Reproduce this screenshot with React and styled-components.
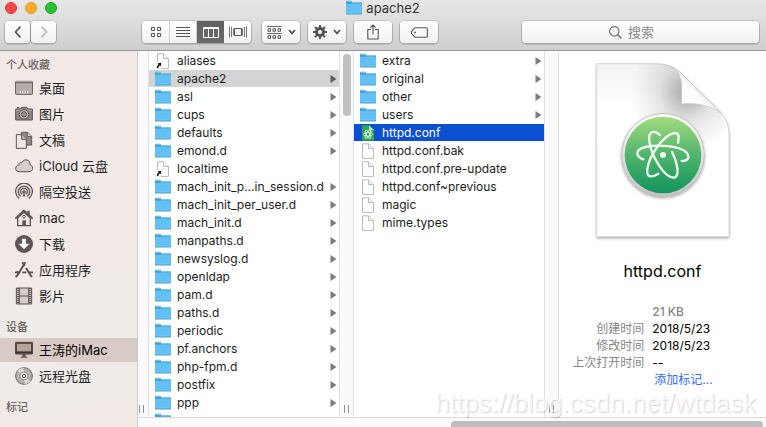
import React from "react";
import styled, { createGlobalStyle, css } from "styled-components";

const GlobalStyle = createGlobalStyle`
  * { box-sizing: border-box; }
  body {
    margin: 0;
    background: #fff;
    font-family: Inter, "Noto Sans CJK SC", sans-serif;
    font-size: 12px;
    color: #1c1c1c;
  }
  button, input { font: inherit; color: inherit; }
  ul, dl, dd, h1, h2, p { margin: 0; padding: 0; }
  ul { list-style: none; }
`;

const Window = styled.div`
  display: flex;
  flex-direction: column;
  height: 100vh;
  overflow: hidden;
  position: relative;
`;

/* ---------- toolbar ---------- */

const Header = styled.header`
  flex: none;
  padding-bottom: 7px;
  background: linear-gradient(#e7e7e7, #cfcfcf);
  border-bottom: 1px solid #979797;
`;

const TitleBar = styled.div`
  display: grid;
  grid-template-columns: 1fr auto 1fr;
  align-items: center;
  height: 15px;
  margin-bottom: 6px;
  padding: 0 5px;
`;

const Lights = styled.div`
  display: flex;
  gap: 8px;
`;

const Light = styled.button`
  width: 12px;
  height: 12px;
  padding: 0;
  border: 1px solid ${(p) => p.$edge};
  border-radius: 50%;
  background: ${(p) => p.$fill};
`;

const Title = styled.h1`
  display: flex;
  align-items: center;
  gap: 4px;
  font-size: 13px;
  line-height: 15px;
  font-weight: 400;
  color: #333;
`;

const Tools = styled.div`
  display: flex;
  align-items: center;
  gap: 8px;
  padding: 0 7px 0 5px;
`;

const Group = styled.div`
  display: flex;
  gap: 1px;
  margin-right: ${(p) => p.$after || 0}px;
`;

const face = css`
  border-radius: 4px;
  background: linear-gradient(#fff, #f1f1f1);
  box-shadow: 0 0 0 1px rgba(0, 0, 0, 0.1), 0 1px 0 1px rgba(0, 0, 0, 0.1);
`;

const ToolButton = styled.button`
  ${face}
  display: flex;
  align-items: center;
  justify-content: center;
  gap: 6px;
  width: ${(p) => p.$width}px;
  height: 22px;
  padding: 0;
  border: 0;
  color: ${(p) => (p.$dim ? "#b9b9b9" : "#555")};
`;

const Segments = styled.div`
  ${face}
  display: flex;
  height: 22px;
  margin-right: 3px;
`;

const Segment = styled.button`
  display: flex;
  align-items: center;
  justify-content: center;
  width: 27px;
  height: 22px;
  padding: 0;
  border: 0;
  border-right: 1px solid #d0d0d0;
  background: none;
  color: #555;
  &:first-child { width: 28px; }
  &:last-child { border-right: 0; }
  ${(p) =>
    p.$active &&
    css`
      background: linear-gradient(#606060, #6c6c6c);
      color: #fff;
      border-right: 0;
    `}
`;

const Search = styled.label`
  ${face}
  display: flex;
  flex: 1;
  align-items: center;
  justify-content: center;
  gap: 6px;
  height: 22px;
  margin-left: 76px;
  color: #6a6a6a;
`;

const SearchInput = styled.input`
  width: 44px;
  padding: 0;
  border: 0;
  outline: 0;
  background: none;
  font-size: 13px;
  &::placeholder { color: #8c8c8c; opacity: 1; }
`;

/* ---------- body ---------- */

const Body = styled.div`
  display: flex;
  flex: 1;
  min-height: 0;
`;

const Sidebar = styled.nav`
  flex: none;
  width: 138px;
  padding-top: 5px;
  overflow: hidden;
  border-right: 1px solid #cfcaca;
  background: linear-gradient(170deg, #f3e9e7 0%, #f3eae8 50%, #efece9 75%, #f3ebe9 100%);
`;

const Section = styled.section`
  margin-bottom: 10px;
`;

const SectionTitle = styled.h2`
  padding-left: 6px;
  margin-bottom: 2px;
  font-size: 11px;
  line-height: 18px;
  font-weight: 500;
  color: #6b6463;
`;

const Place = styled.button`
  display: flex;
  align-items: center;
  gap: 6px;
  width: 100%;
  height: 24px;
  padding: 0 0 0 15px;
  border: 0;
  background: ${(p) => (p.$active ? "#d8cac4" : "none")};
  color: ${(p) => (p.$active ? "#000" : "#221f1f")};
  font-size: 13px;
  line-height: 24px;
  text-align: left;
  white-space: nowrap;
`;

const PlaceItem = styled.li`
  margin-bottom: 2px;
  &:last-child { margin-bottom: 0; }
`;

const Browser = styled.main`
  display: flex;
  flex: 1;
  flex-direction: column;
  min-width: 0;
`;

const Panes = styled.div`
  display: flex;
  flex: 1;
  min-height: 0;
`;

const Column = styled.ul`
  flex: none;
  width: 190px;
  padding-top: 1px;
  overflow: hidden;
`;

const Entry = styled.button`
  display: flex;
  align-items: center;
  width: 100%;
  height: 17px;
  margin-bottom: 1px;
  padding: 0 2px 0 6px;
  border: 0;
  gap: 6px;
  background: ${(p) => (p.$state === "open" ? "#d4d4d4" : p.$state === "selected" ? "#0a50d0" : "none")};
  color: ${(p) => (p.$state === "selected" ? "#fff" : "inherit")};
  line-height: 17px;
  text-align: left;
  white-space: nowrap;
`;

const EntryName = styled.span`
  flex: 1;
`;

const Gutter = styled.div`
  display: flex;
  flex: none;
  flex-direction: column;
  align-items: center;
  justify-content: space-between;
  width: ${(p) => p.$width}px;
  padding: 3px 0 4px;
  border: solid #e2e2e2;
  border-width: 0 1px 0 ${(p) => (p.$first ? 0 : 1)}px;
  background: #fafafa;
`;

const Thumb = styled.div`
  width: 8px;
  height: 62px;
  border-radius: 4px;
  background: ${(p) => (p.$shown ? "#c1c1c1" : "none")};
`;

const Grip = styled.div`
  width: 5px;
  height: 8px;
  margin-right: ${(p) => p.$inset || 0}px;
  border: solid #929292;
  border-width: 0 1px;
`;

const ScrollTrack = styled.div`
  display: flex;
  flex: none;
  justify-content: flex-end;
  height: 10px;
  padding: 3px 3px 0 0;
  overflow: hidden;
  border-top: 1px solid #dcdcdc;
  background: #fafafa;
`;

const ScrollThumb = styled.div`
  width: 50%;
  height: 8px;
  border-radius: 4px;
  background: #bdbdbd;
`;

const Preview = styled.aside`
  display: flex;
  flex: 1;
  flex-direction: column;
  align-items: center;
  min-width: 0;
  padding-top: 10px;
`;

const FileName = styled.h2`
  margin: 18px 0 22px;
  font-size: 16px;
  line-height: 20px;
  font-weight: 400;
  color: #000;
`;

const Facts = styled.dl`
  display: grid;
  grid-template-columns: 3fr 4fr;
  column-gap: 8px;
  width: 100%;
  line-height: 17px;
  white-space: nowrap;
`;

const FactLabel = styled.dt`
  color: #868686;
  text-align: right;
`;

const FactValue = styled.dd`
  color: ${(p) => (p.$muted ? "#868686" : "#000")};
  font-weight: ${(p) => (p.$muted ? 500 : 400)};
`;

const TagLink = styled.a`
  padding-left: 2px;
  color: #2f6bff;
  text-decoration: none;
`;

const Watermark = styled.p`
  position: absolute;
  right: 10px;
  bottom: 9px;
  font-family: "Liberation Sans", sans-serif;
  font-size: 26px;
  line-height: 30px;
  color: rgba(255, 255, 255, 0.75);
  text-shadow: 1px 1px 1px rgba(0, 0, 0, 0.16);
  pointer-events: none;
`;

/* ---------- drawings ---------- */

const Folder = () => (
  <svg width="16" height="16" viewBox="0 0 16 16" aria-hidden="true">
    <path d="M0 2Q0 .8 1 .8H5.300L6.500 2.200H15Q16 2.200 16 3.200V13.400Q16 14.400 15 14.400H1Q0 14.400 0 13.400Z" fill="#3f9fce" />
    <path d="M0 3.800H16V13.200H0Z" fill="#62c0f4" />
    <path d="M1 1.500H5L6.200 2.900H15" fill="none" stroke="#8bd0f5" strokeWidth=".8" />
    <path d="M1 13H15" stroke="#7bcdf7" strokeWidth=".8" />
  </svg>
);

const Page = ({ alias }) => (
  <svg width="16" height="16" viewBox="0 0 16 16" aria-hidden="true">
    <path d="M2.5.8H8.500L13.500 5.500V15.400H2.500Z" fill="#fff" stroke="#bababa" />
    <path d="M8.500 .8V5.500H13.500" fill="#f3f3f3" stroke="#bababa" />
    {alias && (
      <g>
        <path d="M1 9H6.500V15.500H1Z" fill="#fff" stroke="#ddd" strokeWidth=".6" />
        <path d="M2.700 10H6V13.300L4.900 12.200Q3.400 13.200 3.400 15H1.800Q1.800 12.400 3.800 11.100Z" fill="#111" />
      </g>
    )}
  </svg>
);

const orbits = [
  "M190 328C165 318 165 298 197 291C235 282 300 288 320 308C331 323 324 333 305 333",
  "M235 371C215 383 199 384 202 358C206 320 250 254 283 249C299 248 297 262 294 278",
  "M240 255C222 239 204 243 208 273C214 320 255 386 284 383C299 378 293 340 276 306",
];

const AtomPage = () => (
  <svg width="16" height="16" viewBox="0 0 16 16" aria-hidden="true">
    <path d="M2 .3H9L14 5.300V15.700H2Z" fill="#32a455" />
    <path d="M9 .3V5.300H14Z" fill="#b9e7b1" />
    <g fill="none" stroke="#e8ffec" strokeWidth=".8">
      <ellipse cx="8" cy="9.3" rx="4.6" ry="1.8" />
      <ellipse cx="8" cy="9.3" rx="4.6" ry="1.8" transform="rotate(60 8 9.3)" />
      <ellipse cx="8" cy="9.3" rx="4.6" ry="1.8" transform="rotate(120 8 9.3)" />
    </g>
  </svg>
);

const Chevron = ({ left, small }) => (
  <svg width="8" height={small ? 6 : 12} viewBox={small ? "0 0 8 6" : "0 0 8 12"} fill="none" stroke="currentColor" strokeWidth={small ? 1.8 : 1.7} aria-hidden="true">
    <path d={small ? "M1 1L4 4.3L7 1" : left ? "M6.5 .7L1.5 6L6.5 11.3" : "M1.5 .7L6.5 6L1.5 11.3"} />
  </svg>
);

const Disclosure = ({ dark }) => (
  <svg width="7" height="8" viewBox="0 0 7 8" aria-hidden="true">
    <path d="M.5 0L6.500 4L.5 8Z" fill={dark ? "#5c5c5c" : "#7d7d7d"} />
  </svg>
);

const toolArt = {
  icons: (
    <svg width="12" height="11" viewBox="0 0 12 11" fill="none" stroke="currentColor">
      <path d="M1.500 .5H4.500V3.500H1.500ZM7.500 .5H10.500V3.500H7.500ZM1.500 6.500H4.500V9.500H1.500ZM7.500 6.500H10.500V9.500H7.500Z" />
    </svg>
  ),
  list: (
    <svg width="14" height="11" viewBox="0 0 14 11" fill="none" stroke="currentColor">
      <path d="M0 .5H14M0 3.5H14M0 6.5H14M0 9.5H14" />
    </svg>
  ),
  columns: (
    <svg width="16" height="11" viewBox="0 0 16 11" fill="none" stroke="currentColor">
      <path d="M.5 .5H15.5V10.5H.5ZM5.5 .5V10.5M10.5 .5V10.5M.5 1.5H15.5" />
    </svg>
  ),
  flow: (
    <svg width="18" height="12" viewBox="0 0 18 12" fill="none" stroke="currentColor">
      <path d="M.5 .5V11.5M2.5 1V11M17.5 .5V11.5M15.5 1V11M4.5 2.5V9.5M13.5 2.5V9.5" strokeWidth=".8" />
      <path d="M5.500 2.500H12.500V9.500H5.500Z" />
    </svg>
  ),
  arrange: (
    <svg width="15" height="13" viewBox="0 0 15 13" fill="none" stroke="currentColor">
      <path d="M0 .5H14.5M0 7.5H14.5" strokeWidth=".9" />
      <path d="M1 2.7H3.5V5.3H1ZM6 2.7H8.5V5.3H6ZM11 2.7H13.5V5.3H11ZM1 9.7H3.5V12.3H1ZM6 9.7H8.5V12.3H6ZM11 9.7H13.5V12.3H11Z" />
    </svg>
  ),
  gear: (
    <svg width="14" height="14" viewBox="0 0 14 14" fill="none" stroke="currentColor">
      <circle cx="7" cy="7" r="3.5" strokeWidth="3" />
      <path d="M7 0V3M7 11V14M0 7H3M11 7H14M2.05 2.05L4.2 4.2M9.8 9.8L11.95 11.95M2.05 11.95L4.2 9.8M9.8 4.2L11.95 2.05" strokeWidth="2.2" />
    </svg>
  ),
  share: (
    <svg width="12" height="16" viewBox="0 0 12 16" fill="none" stroke="currentColor">
      <path d="M4 5.5H.8V15H11.2V5.5H8M6 10.5V1M3.3 3.7L6 1L8.7 3.7" strokeWidth="1.1" />
    </svg>
  ),
  tag: (
    <svg width="17" height="11" viewBox="0 0 17 11" fill="none" stroke="currentColor">
      <path d="M5 .7H15Q16.4 .7 16.4 2V9Q16.4 10.3 15 10.3H5Q3.8 10.3 2.8 9.2L.8 6.8Q0 5.5 .8 4.2L2.8 1.8Q3.8 .7 5 .7Z" strokeWidth="1.1" />
      <circle cx="4" cy="5.5" r=".9" fill="currentColor" stroke="none" />
    </svg>
  ),
  search: (
    <svg width="13" height="13" viewBox="0 0 13 13" fill="none" stroke="currentColor">
      <circle cx="5.3" cy="5.3" r="4.7" strokeWidth="1.1" />
      <path d="M8.7 8.7L12.4 12.4" strokeWidth="1.4" />
    </svg>
  ),
};

const placeArt = {
  desktop: (
    <>
      <path d="M3 7H51L53 12V43Q53 46 50 46H4Q1 46 1 43V12Z" fill="#b7aeac" stroke="#5b5251" strokeWidth="3" />
      <path d="M2 11H52" stroke="#5b5251" strokeWidth="3" />
      <path d="M3 8H51" stroke="#e4dcda" strokeWidth="2" />
      <path d="M14 36H40V44H14Z" fill="#f3ecea" />
      <path d="M20 36V44M27 36V44M34 36V44" stroke="#5b5251" strokeWidth="2" />
    </>
  ),
  camera: (
    <>
      <path d="M2 12H16L20 7H35L39 12H52V45H2Z" fill="#8f8685" stroke="#5b5251" strokeWidth="3" />
      <path d="M3 16H51" stroke="#c9c0be" strokeWidth="2" />
      <circle cx="27" cy="28" r="14" fill="#c9c0be" stroke="#5b5251" strokeWidth="3" />
      <circle cx="27" cy="28" r="8" fill="#9b9290" stroke="#5b5251" strokeWidth="3" />
      <path d="M6 8H13" stroke="#5b5251" strokeWidth="4" />
    </>
  ),
  documents: (
    <>
      <path d="M19 4H38L50 16V42H19Z" fill="#938a89" stroke="#5b5251" strokeWidth="3" />
      <path d="M37 4V17H50" fill="#e9e1df" stroke="#5b5251" strokeWidth="3" />
      <path d="M4 11H21L34 24V52H4Z" fill="#f0e8e6" stroke="#5b5251" strokeWidth="3" />
      <path d="M20 11V25H34" fill="#c9c0be" stroke="#5b5251" strokeWidth="3" />
    </>
  ),
  cloud: <path d="M13 44C5 44 2 39 2 34C2 28 6 24 12 24C11 18 16 14 21 16C24 10 30 7 36 9C43 11 46 17 45 23C50 25 53 29 53 34C53 40 48 44 42 44Z" fill="#d6cecc" stroke="#5b5251" strokeWidth="3" />,
  airdrop: (
    <g fill="none" stroke="#5b5251" strokeWidth="4">
      <path d="M13 46A25 25 0 1 1 41 46" />
      <path d="M17 40A17 17 0 1 1 37 40" />
      <path d="M21 34A10 10 0 1 1 33 34" />
      <circle cx="27" cy="27" r="3" fill="#5b5251" />
      <path d="M27 31L22 40H32Z" fill="#5b5251" stroke="none" />
    </g>
  ),
  home: (
    <>
      <path d="M8 27L27 9L46 27V50H8Z" fill="#efe7e5" stroke="#5b5251" strokeWidth="4" />
      <path d="M37 5H44V20L37 13Z" fill="#5b5251" />
      <path d="M1 29L27 4L53 29" fill="none" stroke="#5b5251" strokeWidth="5" />
      <path d="M22 34H33V51H22Z" fill="#5b5251" />
      <circle cx="27" cy="23" r="4" fill="#efe7e5" stroke="#5b5251" strokeWidth="3" />
    </>
  ),
  download: (
    <>
      <circle cx="27" cy="27" r="27" fill="#5f5655" />
      <path d="M21 11H33V26H43L27 43L11 26H21Z" fill="#fff" />
    </>
  ),
  apps: (
    <g fill="none" stroke="#5b5251" strokeWidth="4">
      <path d="M31 4L8 42L2 48M22 4L29 15M33 21L47 43L51 48" strokeWidth="6" />
      <path d="M0 34H16M22 34H34M42 34H54" strokeWidth="5" />
      <path d="M5 31L13 39" />
    </g>
  ),
  movies: (
    <>
      <path d="M4 3H50V51H4Z" fill="#d4cccb" stroke="#5b5251" strokeWidth="3" />
      <path d="M13 3V51M41 3V51M13 27H41" stroke="#5b5251" strokeWidth="3" />
      <path d="M8.500 3V51M45.500 3V51" stroke="#5b5251" strokeWidth="7" strokeDasharray="3 3" />
    </>
  ),
  imac: (
    <>
      <path d="M3 4H51Q53 4 53 6V36Q53 39 50 39H4Q1 39 1 36V6Q1 4 3 4Z" fill="#b5a49d" stroke="#473733" strokeWidth="3" />
      <path d="M2 35H52" stroke="#473733" strokeWidth="6" />
      <path d="M4 7H50V33H4Z" fill="none" stroke="#473733" strokeWidth="3" />
      <path d="M22 40H32V47H37V50H17V47H22Z" fill="#62514c" />
    </>
  ),
  disc: (
    <>
      <circle cx="27" cy="27" r="25" fill="#b5b0ae" stroke="#6e6766" strokeWidth="3" />
      <path d="M27 27L8 11A25 25 0 0 1 25 2ZM27 27L46 43A25 25 0 0 1 29 52Z" fill="#dedad8" />
      <circle cx="27" cy="27" r="12" fill="#e6e2e0" stroke="#827b79" strokeWidth="2" />
      <circle cx="27" cy="27" r="5" fill="#f5f2f0" stroke="#6e6766" strokeWidth="3" />
    </>
  ),
};

const PlaceIcon = ({ name }) => (
  <svg width="18" height="18" viewBox="0 0 54 54" aria-hidden="true">{placeArt[name]}</svg>
);

const DocumentArt = () => (
  <svg width="136" height="182" viewBox="45 33 408 546" role="img" aria-label="httpd.conf">
    <defs>
      <linearGradient id="paper" x1="0" y1="0" x2="0" y2="1">
        <stop offset="0" stopColor="#f2f2f2" />
        <stop offset=".22" stopColor="#fff" />
      </linearGradient>
      <radialGradient id="shade" gradientUnits="userSpaceOnUse" cx="320" cy="130" r="170">
        <stop offset="0" stopColor="#000" stopOpacity=".34" />
        <stop offset=".5" stopColor="#000" stopOpacity=".1" />
        <stop offset="1" stopColor="#000" stopOpacity="0" />
      </radialGradient>
      <linearGradient id="curl" gradientUnits="userSpaceOnUse" x1="310" y1="160" x2="360" y2="112">
        <stop offset="0" stopColor="#fff" />
        <stop offset=".7" stopColor="#fbfbfb" />
        <stop offset="1" stopColor="#dcdcdc" />
      </linearGradient>
      <linearGradient id="leaf" x1="0" y1="0" x2="0" y2="1">
        <stop offset="0" stopColor="#a3da80" />
        <stop offset=".5" stopColor="#4fb56c" />
        <stop offset="1" stopColor="#12935e" />
      </linearGradient>
      <linearGradient id="rim" x1="0" y1="0" x2="0" y2="1">
        <stop offset="0" stopColor="#fff" />
        <stop offset="1" stopColor="#c4c4c4" />
      </linearGradient>
      <filter id="drop" x="-10%" y="-10%" width="120%" height="120%">
        <feDropShadow dx="0" dy="4" stdDeviation="4" floodOpacity=".4" />
      </filter>
    </defs>
    <path d="M50 41H225C262 41 280 50 300 67L408 172C436 200 447 220 447 262V560H50Z" fill="#fff" filter="url(#drop)" />
    <path d="M50 41H225C262 41 280 50 300 67L408 172C436 200 447 220 447 262V560H50Z" fill="url(#paper)" stroke="#c9c9c9" strokeWidth="2" />
    <path d="M50 41H225C262 41 280 50 300 67L408 172C436 200 447 220 447 262V310H50Z" fill="url(#shade)" />
    <path d="M272 48C295 62 305 80 305 110V162C350 157 395 167 424 192L408 172L300 67C290 58 282 53 272 48Z" fill="url(#curl)" stroke="#bdbdbd" strokeWidth="1.500" />
    <circle cx="249" cy="315" r="124" fill="url(#rim)" stroke="#b2b2b2" strokeWidth="2" filter="url(#drop)" />
    <circle cx="249" cy="315" r="115" fill="url(#leaf)" />
    <g fill="none" stroke="#f3fbf4" strokeWidth="7" strokeLinecap="round">
      {orbits.map((d) => <path key={d} d={d} />)}
    </g>
    <circle cx="249" cy="315" r="9" fill="#f3fbf4" />
  </svg>
);

/* ---------- data ---------- */

const sections = [
  {
    title: "个人收藏",
    places: [
      ["desktop", "桌面"], ["camera", "图片"], ["documents", "文稿"], ["cloud", "iCloud 云盘"],
      ["airdrop", "隔空投送"], ["home", "mac"], ["download", "下载"], ["apps", "应用程序"], ["movies", "影片"],
    ],
  },
  { title: "设备", places: [["imac", "王涛的iMac", true], ["disc", "远程光盘"]] },
  { title: "标记", places: [] },
];

const folder = (name, state) => ({ name, kind: "folder", state });
const etc = [
  { name: "aliases", kind: "alias" },
  folder("apache2", "open"),
  ...["asl", "cups", "defaults", "emond.d"].map((n) => folder(n)),
  { name: "localtime", kind: "alias" },
  ...[
    "mach_init_p...in_session.d", "mach_init_per_user.d", "mach_init.d", "manpaths.d", "newsyslog.d",
    "openldap", "pam.d", "paths.d", "periodic", "pf.anchors", "php-fpm.d", "postfix", "ppp", "",
  ].map((n) => folder(n)),
];
const apache = [
  ...["extra", "original", "other", "users"].map((n) => folder(n)),
  { name: "httpd.conf", kind: "atom", state: "selected" },
  ...["httpd.conf.bak", "httpd.conf.pre-update", "httpd.conf~previous", "magic", "mime.types"].map((name) => ({ name, kind: "page" })),
];
const facts = [
  ["", "21 KB", true],
  ["创建时间", "2018/5/23"],
  ["修改时间", "2018/5/23"],
  ["上次打开时间", "--"],
];

const fileIcons = { folder: <Folder />, alias: <Page alias />, page: <Page />, atom: <AtomPage /> };

const FileColumn = ({ label, entries }) => (
  <Column aria-label={label}>
    {entries.map(({ name, kind, state }) => (
      <li key={name}>
        <Entry $state={state} aria-label={name || "文件夹"}>
          {fileIcons[kind]}
          <EntryName>{name}</EntryName>
          {kind === "folder" && <Disclosure dark={state === "open"} />}
        </Entry>
      </li>
    ))}
  </Column>
);

export default function App() {
  return (
    <Window>
      <GlobalStyle />
      <Header>
        <TitleBar>
          <Lights>
            <Light aria-label="关闭" $fill="#fc4547" $edge="#e0383c" />
            <Light aria-label="最小化" $fill="#fdaf25" $edge="#df9722" />
            <Light aria-label="全屏" $fill="#28c231" $edge="#1fa829" />
          </Lights>
          <Title><Folder />apache2</Title>
        </TitleBar>
        <Tools>
          <Group $after={78}>
            <ToolButton $width={25} aria-label="后退"><Chevron left /></ToolButton>
            <ToolButton $width={25} $dim aria-label="前进"><Chevron /></ToolButton>
          </Group>
          <Segments>
            <Segment aria-label="图标">{toolArt.icons}</Segment>
            <Segment aria-label="列表">{toolArt.list}</Segment>
            <Segment aria-label="分栏" $active>{toolArt.columns}</Segment>
            <Segment aria-label="画廊">{toolArt.flow}</Segment>
          </Segments>
          <ToolButton $width={38} aria-label="排列">{toolArt.arrange}<Chevron small /></ToolButton>
          <ToolButton $width={38} aria-label="操作">{toolArt.gear}<Chevron small /></ToolButton>
          <ToolButton $width={38} aria-label="共享">{toolArt.share}</ToolButton>
          <ToolButton $width={38} aria-label="标记">{toolArt.tag}</ToolButton>
          <Search>
            {toolArt.search}
            <SearchInput placeholder="搜索" aria-label="搜索" />
          </Search>
        </Tools>
      </Header>
      <Body>
        <Sidebar>
          {sections.map((s) => (
            <Section key={s.title}>
              <SectionTitle>{s.title}</SectionTitle>
              <ul>
                {s.places.map(([icon, name, active]) => (
                  <PlaceItem key={name}>
                    <Place $active={active}><PlaceIcon name={icon} />{name}</Place>
                  </PlaceItem>
                ))}
              </ul>
            </Section>
          ))}
        </Sidebar>
        <Browser>
          <Panes>
            <Gutter $width={11} $first><Thumb /><Grip $inset={3} /></Gutter>
            <FileColumn label="etc" entries={etc} />
            <Gutter $width={15}><Thumb $shown /><Grip /></Gutter>
            <FileColumn label="apache2" entries={apache} />
            <Gutter $width={15}><Thumb /><Grip /></Gutter>
            <Preview>
              <DocumentArt />
              <FileName>httpd.conf</FileName>
              <Facts>
                {facts.map(([label, value, muted]) => (
                  <React.Fragment key={label}>
                    <FactLabel>{label}</FactLabel>
                    <FactValue $muted={muted}>{value}</FactValue>
                  </React.Fragment>
                ))}
                <FactLabel />
                <FactValue><TagLink href="#tags">添加标记...</TagLink></FactValue>
              </Facts>
            </Preview>
          </Panes>
          <ScrollTrack><ScrollThumb /></ScrollTrack>
        </Browser>
      </Body>
      <Watermark>https://blog.csdn.net/wtdask</Watermark>
    </Window>
  );
}
